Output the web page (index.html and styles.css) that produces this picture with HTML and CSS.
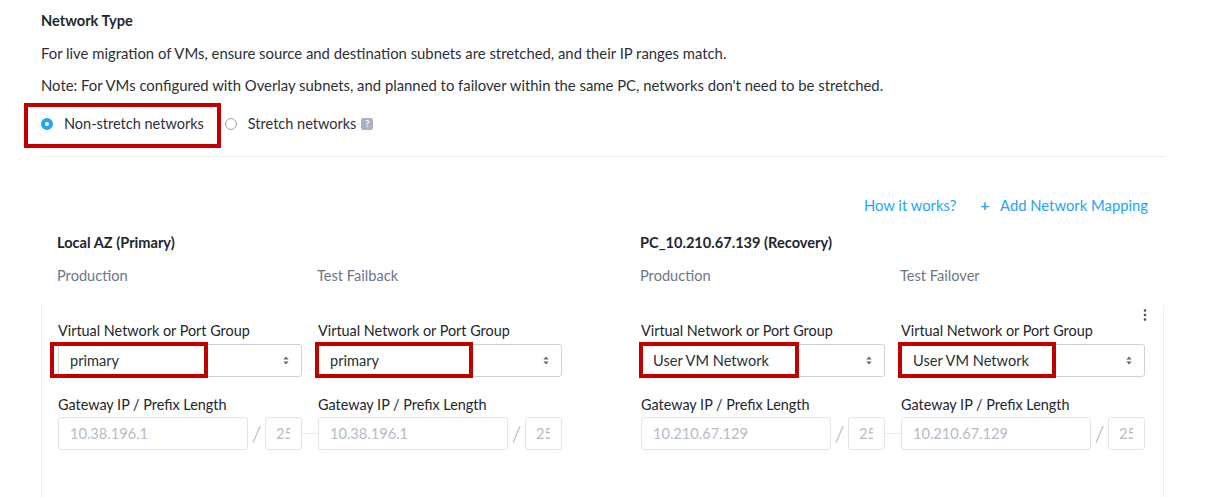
FILE: index.html
```html
<!DOCTYPE html>
<html lang="en">
<head>
<meta charset="utf-8">
<title>Network Type</title>
<link rel="stylesheet" href="styles.css">
</head>
<body>
<div class="page">
  <section class="network-type">
    <h3 class="title">Network Type</h3>
    <p class="desc">For live migration of VMs, ensure source and destination subnets are stretched, and their IP ranges match.</p>
    <p class="desc">Note: For VMs configured with Overlay subnets, and planned to failover within the same PC, networks don't need to be stretched.</p>
    <div class="radio-row">
      <label class="radio-opt marked">
        <span class="radio checked"></span>
        <span>Non-stretch networks</span>
        <span class="mark mark-radio"></span>
      </label>
      <label class="radio-opt">
        <span class="radio"></span>
        <span>Stretch networks</span>
        <span class="help">?</span>
      </label>
    </div>
  </section>

  <div class="divider"></div>

  <section class="mapping">
    <div class="actions">
      <a class="link">How it works?</a>
      <a class="link add"><span class="plus">+</span>Add Network Mapping</a>
    </div>

    <div class="halves az-head">
      <div class="az">
        <div class="az-name">Local AZ (Primary)</div>
        <div class="pair">
          <span class="sub">Production</span>
          <span class="sub">Test Failback</span>
        </div>
      </div>
      <div class="az">
        <div class="az-name">PC_10.210.67.139 (Recovery)</div>
        <div class="pair">
          <span class="sub">Production</span>
          <span class="sub">Test Failover</span>
        </div>
      </div>
    </div>

    <div class="card">
      <span class="kebab">
        <svg width="4" height="12" viewBox="0 0 4 12"><circle cx="2" cy="1.5" r="1.3" fill="#4a525c"/><circle cx="2" cy="6" r="1.3" fill="#4a525c"/><circle cx="2" cy="10.5" r="1.3" fill="#4a525c"/></svg>
      </span>
      <div class="halves">
        <div class="pair fields">
          <div class="field">
            <div class="label">Virtual Network or Port Group</div>
            <div class="select-wrap">
              <div class="select">primary<span class="arrows"><svg width="6" height="9" viewBox="0 0 6 9"><path d="M3 0.5 L5.6 3.5 H0.4 Z M3 8.5 L5.6 5.5 H0.4 Z" fill="#5b6570"/></svg></span></div>
              <span class="mark mark-select"></span>
            </div>
            <div class="label gw">Gateway IP / Prefix Length</div>
            <div class="gateway">
              <div class="input ip">10.38.196.1</div>
              <span class="slash">/</span>
              <div class="input prefix"><span class="clip">25</span></div>
            </div>
          </div>
          <div class="field linked">
            <div class="label">Virtual Network or Port Group</div>
            <div class="select-wrap">
              <div class="select">primary<span class="arrows"><svg width="6" height="9" viewBox="0 0 6 9"><path d="M3 0.5 L5.6 3.5 H0.4 Z M3 8.5 L5.6 5.5 H0.4 Z" fill="#5b6570"/></svg></span></div>
              <span class="mark mark-select mark-b"></span>
            </div>
            <div class="label gw">Gateway IP / Prefix Length</div>
            <div class="gateway">
              <div class="input ip">10.38.196.1</div>
              <span class="slash">/</span>
              <div class="input prefix"><span class="clip">25</span></div>
            </div>
          </div>
        </div>
        <div class="pair fields">
          <div class="field">
            <div class="label">Virtual Network or Port Group</div>
            <div class="select-wrap">
              <div class="select">User VM Network<span class="arrows"><svg width="6" height="9" viewBox="0 0 6 9"><path d="M3 0.5 L5.6 3.5 H0.4 Z M3 8.5 L5.6 5.5 H0.4 Z" fill="#5b6570"/></svg></span></div>
              <span class="mark mark-select mark-c"></span>
            </div>
            <div class="label gw">Gateway IP / Prefix Length</div>
            <div class="gateway">
              <div class="input ip">10.210.67.129</div>
              <span class="slash">/</span>
              <div class="input prefix"><span class="clip">25</span></div>
            </div>
          </div>
          <div class="field linked">
            <div class="label">Virtual Network or Port Group</div>
            <div class="select-wrap">
              <div class="select">User VM Network<span class="arrows"><svg width="6" height="9" viewBox="0 0 6 9"><path d="M3 0.5 L5.6 3.5 H0.4 Z M3 8.5 L5.6 5.5 H0.4 Z" fill="#5b6570"/></svg></span></div>
              <span class="mark mark-select mark-b"></span>
            </div>
            <div class="label gw">Gateway IP / Prefix Length</div>
            <div class="gateway">
              <div class="input ip">10.210.67.129</div>
              <span class="slash">/</span>
              <div class="input prefix"><span class="clip">25</span></div>
            </div>
          </div>
        </div>
      </div>
    </div>
  </section>
</div>
</body>
</html>
```

FILE: styles.css
```css
* { box-sizing: border-box; }

html, body {
  margin: 0;
  padding: 0;
  background: #ffffff;
}

body {
  font-family: Lato, "Open Sans", "Liberation Sans", sans-serif;
  font-size: 14.6px;
  color: #2b3038;
  overflow: hidden;
}

.page {
  width: 1217px;
  height: 497px;
  padding: 11px 0 0 41px;
  overflow: hidden;
}

.network-type {
  width: 1124px;
}

.title {
  margin: 0;
  font-size: 14.6px;
  font-weight: 700;
  line-height: 20px;
  color: #22272e;
}

.desc {
  margin: 12px 0 0;
  font-size: 14.85px;
  line-height: 20px;
  color: #2b3038;
}

.radio-row {
  display: flex;
  align-items: center;
  height: 20px;
  margin-top: 19px;
}

.radio-opt {
  position: relative;
  display: flex;
  align-items: center;
  font-size: 14.5px;
  line-height: 20px;
  color: #2b3038;
}

.radio-opt + .radio-opt {
  margin-left: 21px;
}

.radio {
  display: inline-block;
  width: 12px;
  height: 12px;
  border-radius: 50%;
  border: 1px solid #9aa4af;
  margin-right: 11px;
  background: #fff;
}

.radio.checked {
  border: 4px solid #22a5f7;
  background: #fff;
}

.help {
  display: inline-flex;
  align-items: center;
  justify-content: center;
  width: 12px;
  height: 12px;
  margin-left: 5px;
  border-radius: 2px;
  background: #a9b2bd;
  color: #fff;
  font-size: 9px;
  font-weight: 700;
  line-height: 12px;
}

.mark {
  position: absolute;
  border: 4px solid #c00000;
  pointer-events: none;
}

.mark-radio {
  left: -17px;
  right: -17px;
  top: -11px;
  bottom: -14px;
}

.divider {
  width: 1124px;
  height: 1px;
  margin-top: 22px;
  background: #eceef1;
}

.mapping {
  width: 1123px;
}

.actions {
  display: flex;
  justify-content: flex-end;
  align-items: center;
  height: 20px;
  margin-top: 38px;
  padding-right: 16px;
}

.link {
  color: #22a5f7;
  font-size: 14.8px;
  line-height: 20px;
  text-decoration: none;
}

.link.add {
  margin-left: 24px;
  display: flex;
  align-items: center;
}

.plus {
  font-weight: 700;
  font-size: 15px;
  margin-right: 11px;
}

.halves {
  display: grid;
  grid-template-columns: 504px 504px;
  column-gap: 79px;
}

.az-head {
  margin-top: 18px;
  padding-left: 16px;
}

.az-name {
  font-weight: 700;
  line-height: 20px;
  color: #22272e;
}

.pair {
  display: grid;
  grid-template-columns: 244px 244px;
  column-gap: 16px;
}

.az .pair {
  margin-top: 13px;
}

.sub {
  line-height: 20px;
  color: #6c7784;
}

.card {
  position: relative;
  margin-top: 19px;
  height: 220px;
  padding: 16px 18px 0 16px;
  border-left: 1px solid #eceef1;
  border-right: 1px solid #eceef1;
}

.kebab {
  position: absolute;
  top: 4px;
  right: 16px;
  display: flex;
}

.field {
  position: relative;
}

.label {
  font-size: 14.4px;
  line-height: 20px;
  color: #22272e;
}

.label.gw {
  margin-top: 18px;
}

.select-wrap {
  position: relative;
  margin-top: 3px;
}

.select {
  position: relative;
  height: 33px;
  padding: 0 11px;
  border: 1px solid #cbd2db;
  border-radius: 3px;
  display: flex;
  align-items: center;
  color: #2b3038;
  background: #fff;
}

.arrows {
  position: absolute;
  right: 12px;
  top: 11px;
  display: flex;
}

.mark-select {
  left: -8px;
  top: -2px;
  width: 158px;
  height: 36px;
}

.mark-b {
  left: -3px;
}

.mark-c {
  left: -2px;
  width: 160px;
}

.gateway {
  display: flex;
  align-items: center;
  margin-top: 2px;
}

.input {
  height: 33px;
  border: 1px solid #e2e6eb;
  border-radius: 3px;
  display: flex;
  align-items: center;
  color: #b4bcc6;
  background: #fff;
  overflow: hidden;
  white-space: nowrap;
}

.input.ip {
  width: 190px;
  padding-left: 11px;
}

.input.prefix {
  width: 37px;
  padding: 0 11px 0 10px;
}

.clip {
  display: block;
  width: 14px;
  overflow: hidden;
}

.slash {
  width: 17px;
  text-align: center;
  font-size: 22px;
  font-weight: 300;
  color: #9aa3ad;
  line-height: 33px;
}

.field.linked .gateway {
  position: relative;
}

.field.linked .gateway::before {
  content: "";
  position: absolute;
  left: -16px;
  width: 16px;
  height: 1px;
  background: #e6e9ed;
}
```
